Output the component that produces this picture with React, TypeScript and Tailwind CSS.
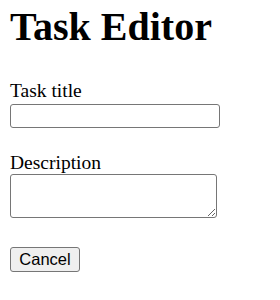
export default function App() {
  return (
    <div className="h-[300px] w-[280px] bg-white pl-[10px] text-black [font-family:'Liberation_Serif',serif]">
      <h1 className="pt-[4px] text-[40px] font-bold leading-[46px]">Task Editor</h1>

      <form className="mt-[30px]" onSubmit={(e) => e.preventDefault()}>
        <label htmlFor="title" className="block text-[19.5px] leading-[22px]">
          Task title
        </label>
        <input
          id="title"
          type="text"
          className="mt-[2px] block h-[24px] w-[210px] rounded-[3px] border border-[#767676] bg-white px-1 text-[16px]"
        />

        <label htmlFor="desc" className="mt-[24px] block text-[19.5px] leading-[22px]">
          Description
        </label>
        <textarea
          id="desc"
          className="block h-[44px] w-[207px] rounded-[3px] border border-[#767676] bg-white px-1 text-[16px]"
        />

        <button
          type="button"
          className="mt-[29px] block h-[25px] w-[70px] rounded-[3px] border border-[#767676] bg-[#efefef] text-[16.5px] leading-none [font-family:'Liberation_Sans',sans-serif]"
        >
          Cancel
        </button>
      </form>
    </div>
  );
}
